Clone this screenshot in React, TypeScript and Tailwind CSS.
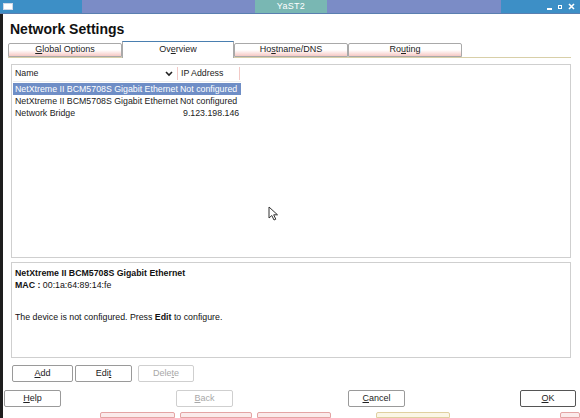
import React from "react";

const font = { fontFamily: '"Liberation Sans", Arial, sans-serif' };

function U({ children }: { children: React.ReactNode }) {
  return <span className="underline underline-offset-[1px]">{children}</span>;
}

function Btn({
  children,
  className = "",
  disabled = false,
  strong = false,
}: {
  children: React.ReactNode;
  className?: string;
  disabled?: boolean;
  strong?: boolean;
}) {
  return (
    <div
      className={
        "h-[17px] flex items-center justify-center rounded-[2px] bg-white text-[9px] " +
        (disabled
          ? "border border-[#cfcfcf] text-[#a8a8a8] "
          : strong
          ? "border border-[#555] text-[#222] "
          : "border border-[#9a9a9a] text-[#222] ") +
        className
      }
    >
      {children}
    </div>
  );
}

function Tab({
  label,
  active = false,
  w,
}: {
  label: React.ReactNode;
  active?: boolean;
  w: string;
}) {
  return active ? (
    <div
      className={
        "h-[17px] -mb-px border border-b-0 border-[#a9a9a9] border-t-[#4a7fb0] bg-white flex items-center justify-center text-[9px] text-[#222] " +
        w
      }
    >
      {label}
    </div>
  ) : (
    <div
      className={
        "h-[14px] border border-[#a9a9a9] rounded-t-[2px] bg-gradient-to-b from-white from-50% to-[#f6c8c4] flex items-center justify-center text-[9px] text-[#222] " +
        w
      }
    >
      {label}
    </div>
  );
}

export default function App() {
  return (
    <div
      className="w-[580px] h-[418px] overflow-hidden bg-white flex flex-col relative"
      style={font}
    >
      {/* window title bar */}
      <div className="h-[14px] flex shrink-0 border-b border-[#5a7fb0]">
        <div className="w-[82px] bg-[#3d8fc6] flex items-center pl-[3px]">
          <div className="w-[10px] h-[7px] bg-white border border-[#d0d8e8]" />
        </div>
        <div className="w-[173px] bg-[#7b8cc6]" />
        <div className="w-[72px] bg-[#79b7b3] flex items-center justify-center text-[9px] text-white tracking-[0.3px]">
          YaST2
        </div>
        <div className="flex-1 bg-[#7b8cc6]" />
        <div className="w-[79px] bg-[#3d8fc6] flex items-center justify-end gap-[6px] pr-[5px] text-white">
          <span className="w-[5px] h-[2px] bg-white mt-[4px]" />
          <span className="w-[4px] h-[4px] border border-white" />
          <svg width="7" height="7" viewBox="0 0 7 7">
            <path d="M1 1 L6 6 M6 1 L1 6" stroke="white" strokeWidth="1.6" />
          </svg>
        </div>
      </div>

      <div className="flex flex-1 min-h-0">
        {/* dark frame edge */}
        <div className="w-[3px] bg-[#1e1e1e] shrink-0" />
        <div className="flex-1 flex flex-col min-w-0">
          <div className="pl-[7px] pt-[6px] h-[27px] text-[14px] font-bold text-[#111] leading-[18px]">
            Network Settings
          </div>

          {/* tab strip */}
          <div className="flex items-end ml-[5px] mr-[9px] border-b border-[#d8cfa8] h-[17px]">
            <Tab w="w-[114px]" label={<><U>G</U>lobal Options</>} />
            <Tab w="w-[112px]" active label={<>Ov<U>e</U>rview</>} />
            <Tab w="w-[114px]" label={<>Ho<U>s</U>tname/DNS</>} />
            <Tab w="w-[114px]" label={<>Ro<U>u</U>ting</>} />
          </div>

          {/* interface list */}
          <div className="mt-[6px] ml-[8px] mr-[9px] h-[197px] border border-[#cfcfcf] pt-[2px] px-[1px] text-[8.8px] text-[#222]">
            <div className="flex h-[15px] items-center w-[228px] border-b border-[#eee]">
              <div className="w-[164px] pl-[2px] flex items-center justify-between pr-[4px]">
                <span>Name</span>
                <svg width="8" height="6" viewBox="0 0 8 6">
                  <path d="M1 1 L4 4 L7 1" stroke="#222" strokeWidth="1.6" fill="none" />
                </svg>
              </div>
              <div className="w-px h-[13px] bg-[#f2c9c6]" />
              <div className="w-[62px] pl-[3px] border-r border-[#f2c9c6] h-[13px] flex items-center">
                IP Address
              </div>
            </div>
            <div className="flex flex-col mt-[1px] w-[228px] leading-[12px]">
              <div className="flex bg-[#6f8ec6] text-white h-[12px]">
                <span className="w-[166px] pl-[2px] whitespace-nowrap">
                  NetXtreme II BCM5708S Gigabit Ethernet
                </span>
                <span className="pl-[1px] whitespace-nowrap">Not configured</span>
              </div>
              <div className="flex h-[12px]">
                <span className="w-[166px] pl-[2px] whitespace-nowrap">
                  NetXtreme II BCM5708S Gigabit Ethernet
                </span>
                <span className="pl-[1px] whitespace-nowrap">Not configured</span>
              </div>
              <div className="flex h-[12px]">
                <span className="w-[166px] pl-[2px] whitespace-nowrap">Network Bridge</span>
                <span className="pl-[4px] whitespace-nowrap">9.123.198.146</span>
              </div>
            </div>
          </div>

          {/* details of selected device */}
          <div className="mt-[4px] ml-[8px] mr-[9px] h-[98px] border border-[#cfcfcf] px-[3px] pt-[4px] text-[8.8px] text-[#111] leading-[12px]">
            <div className="font-bold">NetXtreme II BCM5708S Gigabit Ethernet</div>
            <div>
              <span className="font-bold">MAC : </span>00:1a:64:89:14:fe
            </div>
            <div className="h-[20px]" />
            <div>
              The device is not configured. Press <span className="font-bold">Edit</span> to
              configure.
            </div>
          </div>

          {/* list actions */}
          <div className="flex gap-[2px] ml-[9px] mt-[7px]">
            <Btn className="w-[61px]">
              <U>A</U>dd
            </Btn>
            <Btn className="w-[57px]">
              Edi<U>t</U>
            </Btn>
            <Btn className="w-[56px] ml-[4px]" disabled>
              Dele<U>t</U>e
            </Btn>
          </div>

          {/* dialog buttons */}
          <div className="flex items-center mt-[8px] ml-[1px] mr-[4px]">
            <Btn className="w-[57px]">
              <U>H</U>elp
            </Btn>
            <Btn className="w-[57px] ml-[115px]" disabled>
              <U>B</U>ack
            </Btn>
            <Btn className="w-[57px] ml-[115px]">
              <U>C</U>ancel
            </Btn>
            <div className="flex-1" />
            <Btn className="w-[56px]" strong>
              <U>O</U>K
            </Btn>
          </div>

          {/* buttons of the window behind, peeking out below */}
          <div className="flex mt-[5px] h-[6px] ml-[97px]">
            <div className="w-[75px] h-[6px] border border-[#e4a4a4] rounded-t-[2px] bg-[#fbeaea]" />
            <div className="w-[72px] h-[6px] ml-[5px] border border-[#e4a4a4] rounded-t-[2px] bg-[#fbeaea]" />
            <div className="w-[74px] h-[6px] ml-[5px] border border-[#e4a4a4] rounded-t-[2px] bg-[#fbeaea]" />
            <div className="w-[74px] h-[6px] ml-[45px] border border-[#e0d0a0] rounded-t-[2px] bg-[#fbf6e6]" />
            <div className="flex-1" />
            <div className="w-[20px] h-[6px] border border-[#e4a4a4] rounded-t-[2px] bg-[#fbeaea]" />
          </div>
        </div>
      </div>

      {/* mouse pointer */}
      <svg
        className="absolute left-[268px] top-[206px]"
        width="12"
        height="16"
        viewBox="0 0 12 16"
      >
        <path
          d="M1 1 L1 12 L3.8 9.5 L6 14 L7.8 13.2 L5.7 8.8 L9.5 8.8 Z"
          fill="white"
          stroke="#333"
          strokeWidth="1"
          strokeLinejoin="round"
        />
      </svg>
    </div>
  );
}
